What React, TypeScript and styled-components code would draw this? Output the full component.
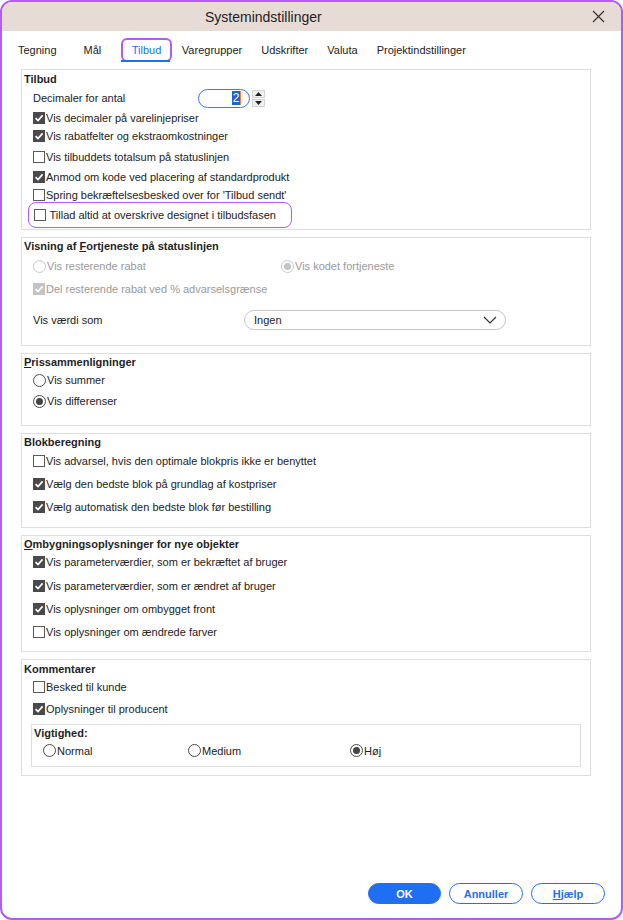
import React from 'react';
import styled, { createGlobalStyle } from 'styled-components';

const GlobalStyle = createGlobalStyle`
  html, body {
    margin: 0;
    padding: 0;
    background: #ffffff;
  }
  body {
    font-family: "Liberation Sans", Arial, sans-serif;
    font-size: 11px;
    color: #222222;
  }
`;

const PURPLE = '#b25cf3';
const BLUE = '#1f6ff2';

/* ---------- small controls ---------- */

const Box = styled.span<{ $checked?: boolean; $disabled?: boolean }>`
  width: 12px;
  height: 12px;
  box-sizing: border-box;
  flex: none;
  display: inline-flex;
  align-items: center;
  justify-content: center;
  border: 1px solid ${({ $checked, $disabled }) => ($disabled ? '#c4c4c4' : $checked ? '#4a4a4a' : '#5a5a5a')};
  background: ${({ $checked, $disabled }) => (!$checked ? '#ffffff' : $disabled ? '#c4c4c4' : '#4a4a4a')};
  margin-right: 1px;
`;

const Round = styled.span<{ $checked?: boolean; $disabled?: boolean }>`
  width: 13px;
  height: 13px;
  box-sizing: border-box;
  flex: none;
  border-radius: 50%;
  border: 1px solid ${({ $disabled }) => ($disabled ? '#c8c8c8' : '#4a4a4a')};
  background: #fff;
  display: inline-flex;
  align-items: center;
  justify-content: center;
  margin-right: 1px;

  &::after {
    content: '';
    display: ${({ $checked }) => ($checked ? 'block' : 'none')};
    width: 7px;
    height: 7px;
    border-radius: 50%;
    background: ${({ $disabled }) => ($disabled ? '#c4c4c4' : '#444')};
  }
`;

const Label = styled.span<{ $disabled?: boolean }>`
  color: ${({ $disabled }) => ($disabled ? '#9a9a9a' : '#222')};
  white-space: nowrap;
`;

const Row = styled.div<{ $h: number; $pad?: number }>`
  height: ${({ $h }) => $h}px;
  display: flex;
  align-items: center;
  padding-left: ${({ $pad }) => ($pad ?? 11)}px;
`;

const Check = ({ checked, disabled, label }: { checked?: boolean; disabled?: boolean; label: string }) => (
  <>
    <Box $checked={checked} $disabled={disabled}>
      {checked && (
        <svg width="10" height="10" viewBox="0 0 10 10">
          <path d="M1.6 5.2 L4 7.6 L8.6 2.4" fill="none" stroke="#fff" strokeWidth="1.7" />
        </svg>
      )}
    </Box>
    <Label $disabled={disabled}>{label}</Label>
  </>
);

const Radio = ({ checked, disabled, label }: { checked?: boolean; disabled?: boolean; label: string }) => (
  <>
    <Round $checked={checked} $disabled={disabled} />
    <Label $disabled={disabled}>{label}</Label>
  </>
);

const Cell = styled.div<{ $w?: number }>`
  display: flex;
  align-items: center;
  width: ${({ $w }) => ($w ? `${$w}px` : 'auto')};
`;

/* ---------- window chrome ---------- */

const Window = styled.div`
  width: 623px;
  height: 920px;
  box-sizing: border-box;
  border: 2px solid ${PURPLE};
  border-radius: 12px;
  overflow: hidden;
  display: flex;
  flex-direction: column;
  background: #fff;
`;

const TitleBar = styled.div`
  height: 29px;
  background: #e6dcd5;
  display: flex;
  align-items: center;
  padding-left: 203px;
`;

const Title = styled.div`
  font-size: 14px;
  color: #222;
`;

const CloseButton = styled.div`
  margin-left: auto;
  margin-right: 16px;
  width: 13px;
  height: 13px;
  display: flex;
`;

const TabBar = styled.div`
  height: 31px;
  display: flex;
  align-items: flex-end;
  padding: 0 0 2px 6.5px;
`;

const Tab = styled.div<{ $active?: boolean }>`
  position: relative;
  height: 24px;
  box-sizing: border-box;
  padding: 0 ${({ $active }) => ($active ? 9 : 9.5)}px;
  display: flex;
  align-items: center;
  font-size: 11px;
  color: ${({ $active }) => ($active ? BLUE : '#222')};
  border: ${({ $active }) => ($active ? `2px solid ${PURPLE}` : 'none')};
  border-radius: 6px;
  margin-left: ${({ $active }) => ($active ? 10 : 0)}px;

  &::after {
    content: '';
    display: ${({ $active }) => ($active ? 'block' : 'none')};
    position: absolute;
    left: -2px;
    right: 0;
    bottom: -2px;
    height: 2px;
    background: ${BLUE};
  }
`;

const Content = styled.div`
  padding: 5px 30px 0 19px;
  display: flex;
  flex-direction: column;
  gap: 7px;
`;

const Group = styled.div<{ $padBottom: number }>`
  border: 1px solid #dedede;
  padding-bottom: ${({ $padBottom }) => $padBottom}px;
`;

const GroupTitle = styled.div<{ $h: number; $pad?: number }>`
  height: ${({ $h }) => $h}px;
  display: flex;
  align-items: center;
  padding-left: ${({ $pad }) => ($pad ?? 2)}px;
  font-weight: bold;
  color: #1f1f1f;

  u {
    text-decoration: underline;
  }
`;

const Highlight = styled.div`
  margin: -2px 0 0 6px;
  width: 264px;
  height: 26px;
  box-sizing: border-box;
  border: 1.5px solid ${PURPLE};
  border-radius: 8px;
  display: flex;
  align-items: center;
  padding-left: 4.5px;
  gap: 3px;
`;

const SpinWrap = styled.div`
  margin-left: 73px;
  display: flex;
  align-items: center;
  gap: 2px;
`;

const SpinInput = styled.div`
  width: 52px;
  height: 19px;
  box-sizing: border-box;
  border: 1px solid #3a78ee;
  border-radius: 10px;
  display: flex;
  align-items: center;
  justify-content: flex-end;
  padding-right: 8px;
`;

const Selected = styled.span`
  background: #1a64d6;
  color: #fff;
  padding: 0 1px;
  font-size: 12px;
  line-height: 14px;
  border-right: 1px solid #f08a24;
`;

const SpinButtons = styled.div`
  display: flex;
  flex-direction: column;
  gap: 1px;
`;

const SpinButton = styled.div`
  width: 13px;
  height: 8px;
  box-sizing: border-box;
  background: #f0f0f0;
  border: 1px solid #d4d4d4;
  display: flex;
  align-items: center;
  justify-content: center;
`;

const SelectBox = styled.div`
  width: 262px;
  height: 20px;
  box-sizing: border-box;
  border: 1px solid #c6c6c6;
  border-radius: 10px;
  display: flex;
  align-items: center;
  justify-content: space-between;
  padding: 0 8px 0 9px;
  color: #222;
`;

const InnerGroup = styled.div`
  margin: 2px 9px 0 9px;
  border: 1px solid #dedede;
  padding-bottom: 6px;
`;

const Footer = styled.div`
  margin-top: auto;
  display: flex;
  justify-content: flex-end;
  gap: 8px;
  padding: 0 16px 14px 0;
`;

const Button = styled.button<{ $primary?: boolean }>`
  width: 74px;
  height: 21px;
  box-sizing: border-box;
  border-radius: 11px;
  border: 1px solid ${BLUE};
  background: ${({ $primary }) => ($primary ? BLUE : '#fff')};
  color: ${({ $primary }) => ($primary ? '#fff' : BLUE)};
  font-family: "Liberation Sans", Arial, sans-serif;
  font-size: 11px;
  font-weight: bold;
  padding: 0;
  cursor: pointer;
`;

export default function App() {
  return (
    <>
      <GlobalStyle />
      <Window>
        <TitleBar>
          <Title>Systemindstillinger</Title>
          <CloseButton>
            <svg width="13" height="13" viewBox="0 0 13 13">
              <path d="M1 1 L12 12 M12 1 L1 12" stroke="#333" strokeWidth="1.2" />
            </svg>
          </CloseButton>
        </TitleBar>

        <TabBar>
          <Tab>Tegning</Tab>
          <Tab style={{ marginLeft: 8 }}>Mål</Tab>
          <Tab $active>Tilbud</Tab>
          <Tab>Varegrupper</Tab>
          <Tab>Udskrifter</Tab>
          <Tab>Valuta</Tab>
          <Tab>Projektindstillinger</Tab>
        </TabBar>

        <Content>
          <Group $padBottom={1}>
            <GroupTitle $h={17}>Tilbud</GroupTitle>
            <Row $h={22}>
              <Label>Decimaler for antal</Label>
              <SpinWrap>
                <SpinInput>
                  <Selected>2</Selected>
                </SpinInput>
                <SpinButtons>
                  <SpinButton>
                    <svg width="7" height="4" viewBox="0 0 7 4"><path d="M0 4 L3.5 0 L7 4 Z" fill="#222" /></svg>
                  </SpinButton>
                  <SpinButton>
                    <svg width="7" height="4" viewBox="0 0 7 4"><path d="M0 0 L7 0 L3.5 4 Z" fill="#222" /></svg>
                  </SpinButton>
                </SpinButtons>
              </SpinWrap>
            </Row>
            <Row $h={18}><Check checked label="Vis decimaler på varelinjepriser" /></Row>
            <Row $h={18}><Check checked label="Vis rabatfelter og ekstraomkostninger" /></Row>
            <Row $h={23}><Check label="Vis tilbuddets totalsum på statuslinjen" /></Row>
            <Row $h={17}><Check checked label="Anmod om kode ved placering af standardprodukt" /></Row>
            <Row $h={19}><Check label="Spring bekræftelsesbesked over for 'Tilbud sendt'" /></Row>
            <Highlight>
              <Check label="Tillad altid at overskrive designet i tilbudsfasen" />
            </Highlight>
          </Group>

          <Group $padBottom={11}>
            <GroupTitle $h={16}>
              <span>Visning af <u>F</u>ortjeneste på statuslinjen</span>
            </GroupTitle>
            <Row $h={24}>
              <Cell $w={248}><Radio disabled label="Vis resterende rabat" /></Cell>
              <Cell><Radio disabled checked label="Vis kodet fortjeneste" /></Cell>
            </Row>
            <Row $h={22}><Check disabled checked label="Del resterende rabat ved % advarselsgrænse" /></Row>
            <Row $h={28} style={{ marginTop: 6 }}>
              <Cell $w={211}><Label>Vis værdi som</Label></Cell>
              <SelectBox>
                <span>Ingen</span>
                <svg width="14" height="8" viewBox="0 0 14 8">
                  <path d="M1 1 L7 7 L13 1" fill="none" stroke="#333" strokeWidth="1.2" />
                </svg>
              </SelectBox>
            </Row>
          </Group>

          <Group $padBottom={14}>
            <GroupTitle $h={15}>
              <span><u>P</u>rissammenligninger</span>
            </GroupTitle>
            <Row $h={22}><Radio label="Vis summer" /></Row>
            <Row $h={20}><Radio checked label="Vis differenser" /></Row>
          </Group>

          <Group $padBottom={9}>
            <GroupTitle $h={15}>Blokberegning</GroupTitle>
            <Row $h={23}><Check label="Vis advarsel, hvis den optimale blokpris ikke er benyttet" /></Row>
            <Row $h={23}><Check checked label="Vælg den bedste blok på grundlag af kostpriser" /></Row>
            <Row $h={23}><Check checked label="Vælg automatisk den bedste blok før bestilling" /></Row>
          </Group>

          <Group $padBottom={7}>
            <GroupTitle $h={15}>
              <span><u>O</u>mbygningsoplysninger for nye objekter</span>
            </GroupTitle>
            <Row $h={22}><Check checked label="Vis parameterværdier, som er bekræftet af bruger" /></Row>
            <Row $h={25}><Check checked label="Vis parameterværdier, som er ændret af bruger" /></Row>
            <Row $h={21}><Check checked label="Vis oplysninger om ombygget front" /></Row>
            <Row $h={25}><Check label="Vis oplysninger om ændrede farver" /></Row>
          </Group>

          <Group $padBottom={8}>
            <GroupTitle $h={17}>Kommentarer</GroupTitle>
            <Row $h={19}><Check label="Besked til kunde" /></Row>
            <Row $h={26}><Check checked label="Oplysninger til producent" /></Row>
            <InnerGroup>
              <GroupTitle $h={16}>Vigtighed:</GroupTitle>
              <Row $h={19}>
                <Cell $w={145}><Radio label="Normal" /></Cell>
                <Cell $w={162}><Radio label="Medium" /></Cell>
                <Cell><Radio checked label="Høj" /></Cell>
              </Row>
            </InnerGroup>
          </Group>
        </Content>

        <Footer>
          <Button $primary style={{ width: 73 }}>OK</Button>
          <Button>Annuller</Button>
          <Button><u>H</u>jælp</Button>
        </Footer>
      </Window>
    </>
  );
}
